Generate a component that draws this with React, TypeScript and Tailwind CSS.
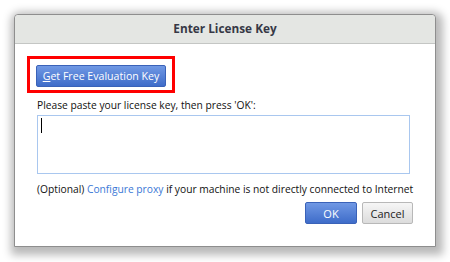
export default function App() {
  const font = { fontFamily: '"Open Sans", "Noto Sans", sans-serif' };
  return (
    <div className="w-[450px] h-[262px] bg-white pt-[14px] pl-[14px]" style={font}>
      <div className="w-[422px] h-[233px] bg-white border border-[#8e8e8e] rounded-t-[4px] shadow-[2px_3px_9px_5px_rgba(0,0,0,0.28)] flex flex-col">
        <div className="h-[29px] bg-[#e4e6e3] border-b border-[#c4c6c4] rounded-t-[4px] flex items-center justify-center">
          <span className="text-[11.8px] font-bold text-[#363846]">Enter License Key</span>
        </div>
        <div className="flex flex-col pl-[12px] pr-[25px] pt-[12px]">
          <div className="w-[148px] h-[37px] border-[3px] border-[#ff0000] p-[6px]">
            <button className="w-[130px] h-[22px] rounded-[2px] border border-[#3a62b8] bg-gradient-to-b from-[#7098e4] to-[#3e6cc9] text-white text-[10.6px] leading-none flex items-center justify-center whitespace-nowrap">
              <span><span className="underline">G</span>et Free Evaluation Key</span>
            </button>
          </div>
          <div className="mt-[5px] pl-[10px] text-[10.25px] leading-[14px] text-[#111]">
            Please paste your license key, then press 'OK':
          </div>
          <div className="ml-[10px] mt-[3px] w-[373px] h-[59px] border-[1.5px] border-[#a9c7ef] pl-[3px] pt-[2px]">
            <div className="w-[1px] h-[15px] bg-black" />
          </div>
          <div className="mt-[8px] pl-[10px] text-[10.25px] leading-[14px] text-[#111] whitespace-nowrap">
            (Optional) <span className="text-[#3b78d6]">Configure proxy</span> if your machine is not directly connected to Internet
          </div>
          <div className="mt-[6px] mr-[-3px] flex justify-end gap-[5px]">
            <button className="w-[52px] h-[22px] rounded-[2px] border border-[#3a62b8] bg-gradient-to-b from-[#7098e4] to-[#3e6cc9] text-white text-[11px] leading-none">
              OK
            </button>
            <button className="w-[51px] h-[22px] rounded-[2px] border border-[#b8b8b8] bg-gradient-to-b from-[#f6f6f6] to-[#dcdcdc] text-[#222] text-[11px] leading-none">
              Cancel
            </button>
          </div>
        </div>
      </div>
    </div>
  );
}
